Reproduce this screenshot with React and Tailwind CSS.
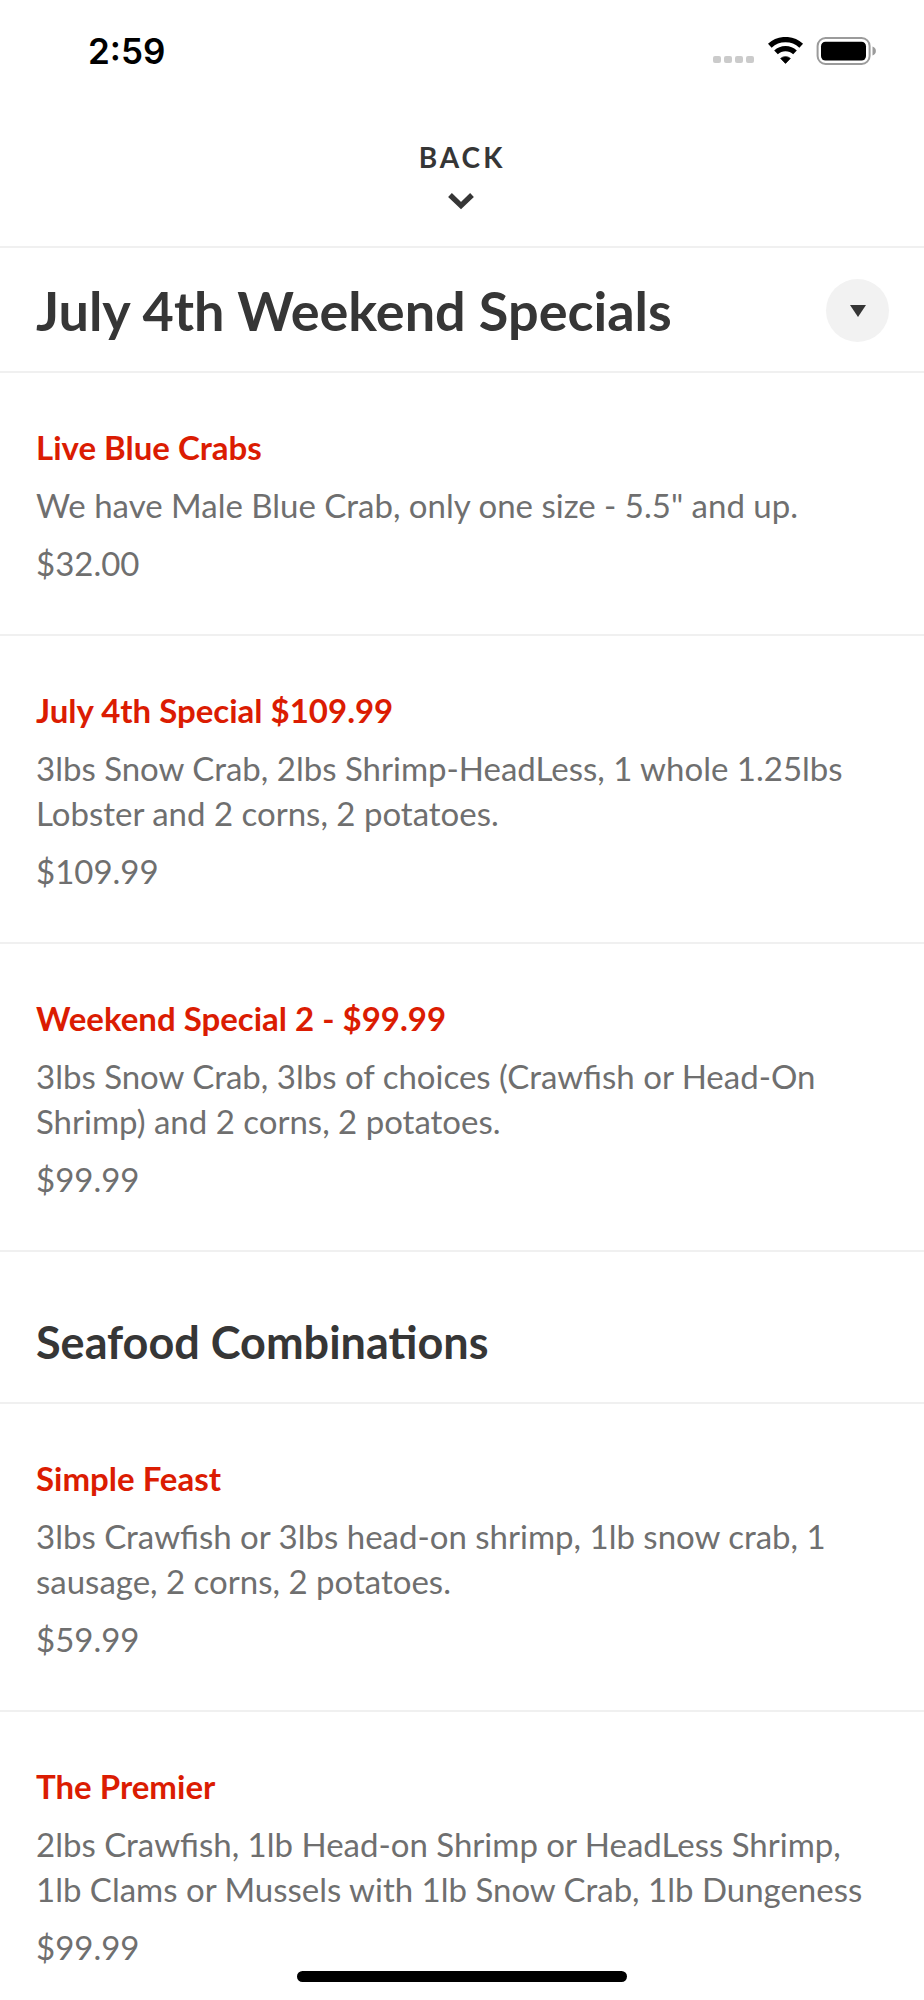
import React, { useState } from 'react';

const specials = [
  {
    name: 'Live Blue Crabs',
    description: 'We have Male Blue Crab, only one size - 5.5" and up.',
    price: 32
  },
  {
    name: 'July 4th Special $109.99',
    description: '3lbs Snow Crab, 2lbs Shrimp-HeadLess, 1 whole 1.25lbs Lobster and 2 corns, 2 potatoes.',
    price: 109.99
  },
  {
    name: 'Weekend Special 2 - $99.99',
    description: '3lbs Snow Crab, 3lbs of choices (Crawfish or Head-On Shrimp) and 2 corns, 2 potatoes.',
    price: 99.99
  }
];

const combinations = [
  {
    name: 'Simple Feast',
    description: '3lbs Crawfish or 3lbs head-on shrimp, 1lb snow crab, 1 sausage, 2 corns, 2 potatoes.',
    price: 59.99
  },
  {
    name: 'The Premier',
    description: '2lbs Crawfish, 1lb Head-on Shrimp or HeadLess Shrimp, 1lb Clams or Mussels with 1lb Snow Crab, 1lb Dungeness',
    price: 99.99
  }
];

const StatusBar = () => (
  <div className="flex items-center justify-between h-[102px] pl-[88px] pr-12">
    <span className="font-['Inter',sans-serif] text-[35px] leading-10 font-semibold text-black">2:59</span>
    <div className="flex items-center">
      <svg width="42" height="28" viewBox="0 0 42 28" className="mr-[13px]" fill="#cbcbcb" aria-hidden="true">
        <rect x="0" y="19" width="8" height="7" rx="2" />
        <rect x="11" y="19" width="8" height="7" rx="2" />
        <rect x="22" y="19" width="8" height="7" rx="2" />
        <rect x="33" y="19" width="8" height="7" rx="2" />
      </svg>
      <svg width="36" height="28" viewBox="0 0 36 28" className="mr-3" aria-hidden="true">
        <path d="M1.8 8.8 A23 23 0 0 1 33.2 8.8" fill="none" stroke="#000" strokeWidth="5.4" />
        <path d="M8 15.4 A13.6 13.6 0 0 1 27 15.4" fill="none" stroke="#000" strokeWidth="5.2" />
        <path d="M12.7 21.4 A7.4 7.4 0 0 1 22.3 21.4 L17.5 26.4 Z" fill="#000" stroke="#000" strokeWidth="0.8" strokeLinejoin="round" />
      </svg>
      <svg width="60" height="28" viewBox="0 0 60 28" aria-hidden="true">
        <rect x="1.6" y="1" width="52" height="26" rx="8" fill="none" stroke="#9b9b9b" strokeWidth="2" />
        <rect x="5" y="4.7" width="45" height="18.8" rx="4.5" fill="#000" />
        <path d="M56.5 9.5 C61 11 61 17 56.5 18.5 Z" fill="#9b9b9b" />
      </svg>
    </div>
  </div>
);

const MenuItem = ({ item }) => (
  <li className="flex flex-col gap-[13px] px-9 pt-[52px] pb-12 border-b-2 border-[#f0f0f0] text-[33px] leading-[45px] text-[#6f6f6f]">
    <h3 className="font-bold text-[#db1c02]">{item.name}</h3>
    <p>{item.description}</p>
    <p>${item.price.toFixed(2)}</p>
  </li>
);

const MenuPage = () => {
  const [open, setOpen] = useState(false);

  return (
    <div className="relative min-h-screen overflow-hidden bg-white font-['Lato',sans-serif] text-[#363636] antialiased">
      <StatusBar />

      <header className="flex justify-center h-[146px] pt-[39px] border-b-2 border-[#f0f0f0]">
        <button type="button" className="flex flex-col items-center h-fit pr-[2px]">
          <span className="pl-[2px] text-[28px] leading-8 font-bold tracking-[3px]">BACK</span>
          <svg width="26" height="18" viewBox="0 0 26 18" className="mt-[19px]" aria-hidden="true">
            <path d="M2 3 L13 13.6 L24 3" fill="none" stroke="#363636" strokeWidth="5.4" />
          </svg>
        </button>
      </header>

      <main>
        <div className="flex items-center justify-between h-[125px] pt-[2px] pl-9 pr-[35px] border-b-2 border-[#f0f0f0]">
          <h1 className="text-[54px] leading-[64px] font-bold">July 4th Weekend Specials</h1>
          <button
            type="button"
            aria-label="Choose a menu section"
            aria-expanded={open}
            onClick={() => setOpen(!open)}
            className="flex items-center justify-center size-[63px] rounded-full bg-[#f2f2f2]"
          >
            <svg width="16" height="12" viewBox="0 0 16 12" aria-hidden="true">
              <path d="M0 0 H16 L8 12 Z" fill="#363636" />
            </svg>
          </button>
        </div>

        <ul>
          {specials.map(item => <MenuItem key={item.name} item={item} />)}
        </ul>

        <h2 className="px-9 pt-[63px] pb-[33px] border-b-2 border-[#f0f0f0] text-[45px] leading-[54px] font-bold">
          Seafood Combinations
        </h2>

        <ul className="-mb-16">
          {combinations.map(item => <MenuItem key={item.name} item={item} />)}
        </ul>
      </main>

      <div className="fixed bottom-[18px] left-1/2 -translate-x-1/2 w-[330px] h-[11px] rounded-full bg-black" />
    </div>
  );
};

export default MenuPage;
